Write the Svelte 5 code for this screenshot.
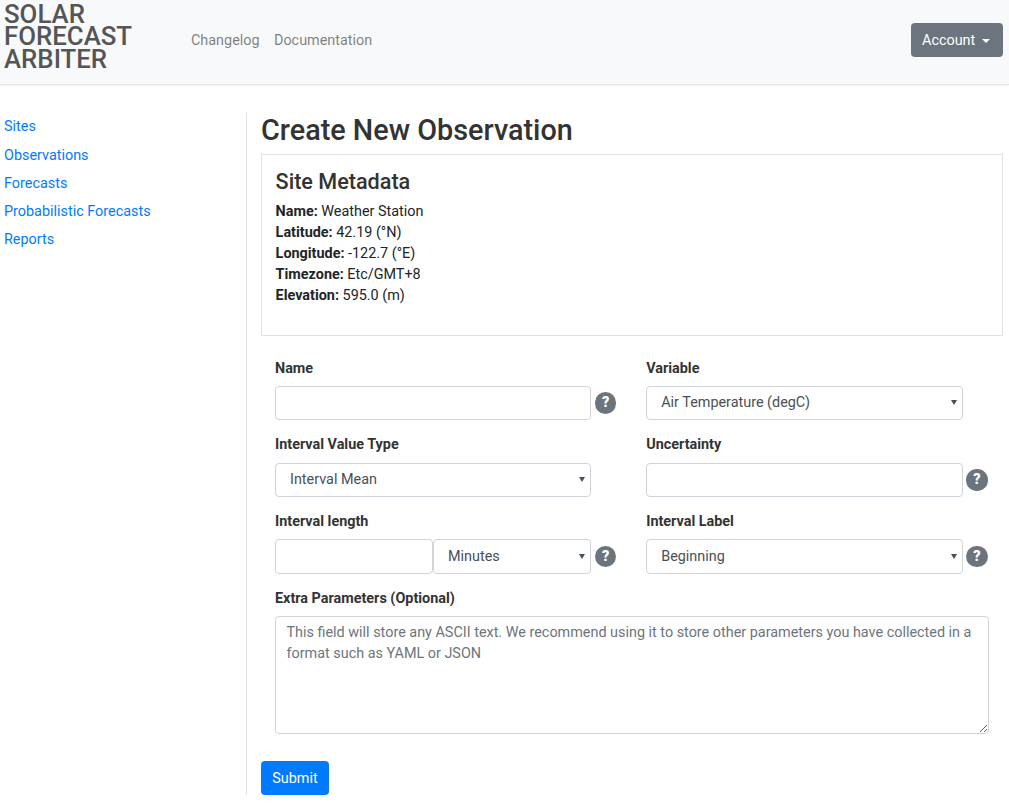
<script>
    let links = ['Sites', 'Observations', 'Forecasts', 'Probabilistic Forecasts', 'Reports']
    let meta = [
        ['Name:', 'Weather Station'],
        ['Latitude:', '42.19 (°N)'],
        ['Longitude:', '-122.7 (°E)'],
        ['Timezone:', 'Etc/GMT+8'],
        ['Elevation:', '595.0 (m)']
    ]
</script>

<header class="navbar">
    <a class="brand" href="#top">SOLAR<br />FORECAST<br />ARBITER</a>
    <nav class="top-links">
        <a href="#top">Changelog</a>
        <a href="#top">Documentation</a>
    </nav>
    <button class="account">Account <span class="caret"></span></button>
</header>

<div class="page">
    <aside class="sidebar">
        {#each links as link}
            <a href="#top">{link}</a>
        {/each}
    </aside>

    <main class="content">
        <h1>Create New Observation</h1>
        <section class="site-card">
            <h2>Site Metadata</h2>
            {#each meta as [key, value]}
                <div class="meta"><b>{key}</b> {value}</div>
            {/each}
        </section>

        <form class="obs-form" on:submit|preventDefault>
            <div class="field">
                <label for="name">Name</label>
                <div class="line">
                    <input id="name" type="text" />
                    <span class="help">?</span>
                </div>
            </div>
            <div class="field">
                <label for="variable">Variable</label>
                <div class="line">
                    <select id="variable"><option>Air Temperature (degC)</option></select>
                    <span class="help hidden">?</span>
                </div>
            </div>
            <div class="field">
                <label for="value_type">Interval Value Type</label>
                <div class="line">
                    <select id="value_type"><option>Interval Mean</option></select>
                    <span class="help hidden">?</span>
                </div>
            </div>
            <div class="field">
                <label for="uncertainty">Uncertainty</label>
                <div class="line">
                    <input id="uncertainty" type="text" />
                    <span class="help">?</span>
                </div>
            </div>
            <div class="field">
                <label for="interval_length">Interval length</label>
                <div class="line">
                    <input id="interval_length" class="half" type="text" />
                    <select class="half" aria-label="Units"><option>Minutes</option></select>
                    <span class="help">?</span>
                </div>
            </div>
            <div class="field">
                <label for="interval_label">Interval Label</label>
                <div class="line">
                    <select id="interval_label"><option>Beginning</option></select>
                    <span class="help">?</span>
                </div>
            </div>
            <div class="field wide">
                <label for="extra">Extra Parameters (Optional)</label>
                <textarea id="extra" placeholder="This field will store any ASCII text. We recommend using it to store other parameters you have collected in a format such as YAML or JSON"></textarea>
            </div>
        </form>

        <button class="submit">Submit</button>
    </main>
</div>

<style>
    :global(body) {
        margin: 0;
        font-family: Roboto, sans-serif;
        font-size: 14.4px;
        line-height: 21px;
        color: #212529;
        background: #fff;
    }

    .navbar {
        display: flex;
        align-items: center;
        height: 84px;
        box-sizing: content-box;
        padding: 0 6px 0 4px;
        background: #f8f9fa;
        border-bottom: 1px solid #e3e4e6;
        box-shadow: 0 1px 2px rgba(0, 0, 0, 0.06);
    }
    .brand {
        width: 187px;
        margin-bottom: 11px;
        font-size: 25.8px;
        font-weight: 500;
        line-height: 22.4px;
        color: #555;
        text-decoration: none;
    }
    .top-links {
        display: flex;
        gap: 14.4px;
        flex: 1;
        margin-bottom: 4px;
    }
    .top-links a {
        color: rgba(0, 0, 0, 0.5);
        text-decoration: none;
    }
    .account {
        width: 92px;
        height: 34px;
        margin-bottom: 4px;
        padding: 0 0 0 11px;
        border: 0;
        border-radius: 4px;
        background: #6c757d;
        color: #fff;
        font: inherit;
        text-align: left;
    }
    .caret {
        display: inline-block;
        margin-left: 3px;
        vertical-align: 2px;
        border-top: 4px solid #fff;
        border-left: 4px solid transparent;
        border-right: 4px solid transparent;
    }

    .page {
        display: flex;
        padding: 28px 6px 0 0;
    }
    .sidebar {
        display: flex;
        flex-direction: column;
        width: 247px;
        padding: 3.4px 0 0 4px;
        box-sizing: border-box;
        border-right: 1px solid #dee2e6;
        gap: 7.2px;
    }
    .sidebar a {
        color: #007bff;
        text-decoration: none;
    }
    .content {
        flex: 1;
        padding-left: 14px;
        min-width: 0;
    }
    h1 {
        margin: 0 0 7px;
        font-size: 28.8px;
        line-height: 34px;
        font-weight: 500;
        color: #333;
    }
    h2 {
        margin: 0 0 7px;
        font-size: 21.6px;
        line-height: 25px;
        font-weight: 500;
        color: #333;
    }
    .site-card {
        height: 182px;
        box-sizing: border-box;
        padding: 14px 14px 14px 13.6px;
        border: 1px solid #dee2e6;
    }
    b {
        font-weight: 700;
    }

    .obs-form {
        display: grid;
        grid-template-columns: 371px 371px;
        column-gap: 0.2px;
        padding-top: 21.6px;
    }
    .field {
        padding: 0 14px 14.2px;
        min-width: 0;
    }
    .wide {
        grid-column: 1 / 3;
    }
    label {
        display: block;
        margin-bottom: 7.2px;
        font-weight: 700;
        color: #333;
    }
    .line {
        display: flex;
        align-items: center;
    }
    input, select, textarea {
        box-sizing: border-box;
        height: 34.4px;
        min-width: 0;
        flex: 1;
        padding: 0 10.5px;
        border: 1px solid #ced4da;
        border-radius: 4px;
        background-color: #fff;
        color: #495057;
        font: inherit;
    }
    select {
        appearance: none;
        padding-left: 14px;
        background-image: url("data:image/svg+xml,%3Csvg xmlns='http://www.w3.org/2000/svg' width='6' height='5'%3E%3Cpath d='M0 0h6L3 5z' fill='%23495057'/%3E%3C/svg%3E");
        background-repeat: no-repeat;
        background-position: right 5px center;
    }
    .half {
        flex: 1 1 50%;
    }
    textarea {
        display: block;
        width: 100%;
        height: 118px;
        padding: 5px 10.5px;
    }
    textarea::placeholder {
        color: #6c757d;
        opacity: 1;
    }
    .help {
        flex: none;
        width: 21.6px;
        height: 21.6px;
        margin: 0 1.6px 0 3.4px;
        border-radius: 50%;
        background: #6c757d;
        color: #fff;
        font-weight: 900;
        font-size: 14.4px;
        line-height: 21px;
        text-align: center;
    }
    .hidden {
        visibility: hidden;
    }
    .submit {
        display: block;
        width: 68px;
        height: 34px;
        margin-top: 12.6px;
        padding: 1px 0 0;
        border: 0;
        border-radius: 4px;
        background: #007bff;
        color: #fff;
        font: inherit;
    }
</style>
